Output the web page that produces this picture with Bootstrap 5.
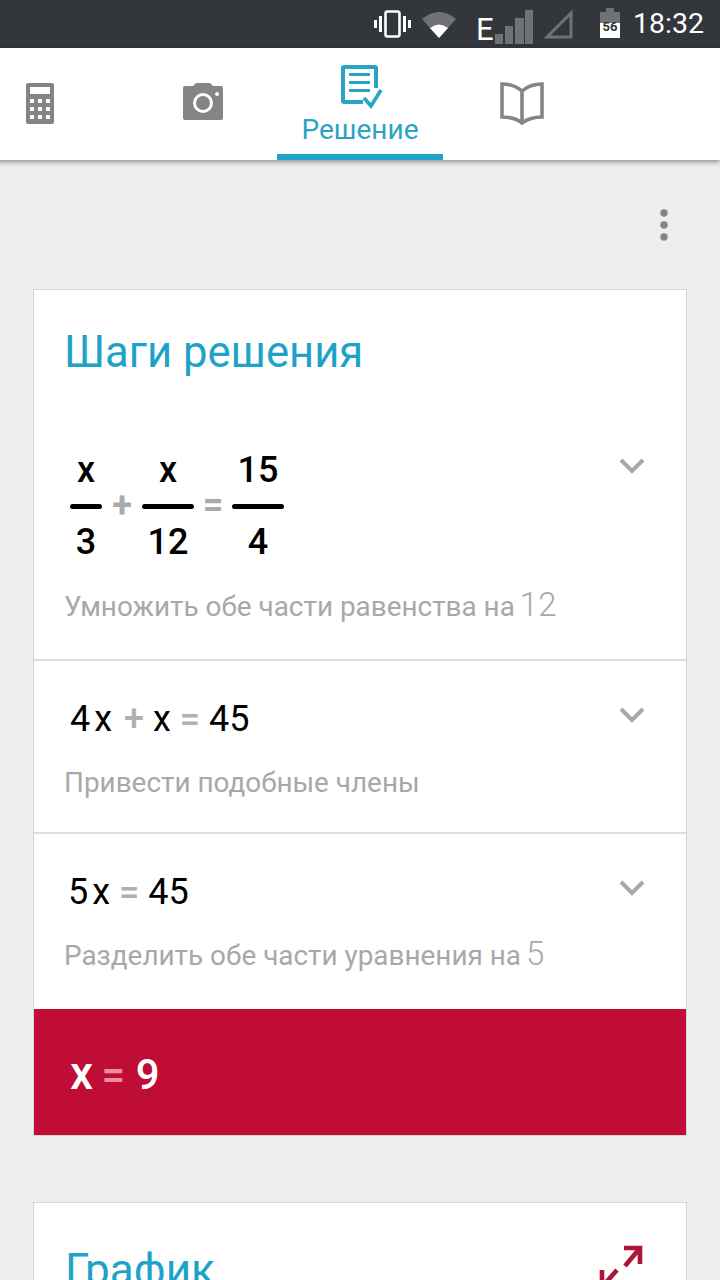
<!DOCTYPE html>
<html lang="ru">
<head>
  <meta charset="UTF-8" />
  <title>Решение</title>
  <meta name="viewport" content="width=device-width, initial-scale=1" />
  <link href="https://cdn.jsdelivr.net/npm/bootstrap@5.3.0/dist/css/bootstrap.min.css" rel="stylesheet" />
  <style>
    html, body { height: 1280px; overflow: hidden; }
    body { background: #eeeeee; font-family: Roboto, "Noto Sans", sans-serif; }
    .status-strip { height: 48px; background: #33363a; color: #fff; padding-right: 16px; }
    .status-strip svg { display: block; flex: none; }
    .ico-wifi { margin-left: 11px; }
    .net-e { font-weight: 400; font-size: 31px; line-height: 1; width: 18px; margin: 11px 0 0 20px; }
    .ico-signal { margin: 6px 0 0 1px; }
    .ico-tri { margin-left: 11px; }
    .ico-batt { margin: 0 0 2px 26px; }
    .clock { font-size: 28.5px; line-height: 1; width: 71px; margin-left: 13px; }
    .tab-strip { height: 112px; background: #fff; box-shadow: 0 2px 5px rgba(0,0,0,.4); margin-left: -40px; position: relative; }
    .tab-one { height: 112px; flex: none; }
    .tab-calc { width: 160px; padding-top: 35px; }
    .tab-cam { width: 157px; padding: 35px 0 0 9px; }
    .tab-on { width: 166px; border-bottom: 6px solid #1fa3c8; padding-top: 17px; color: #2ba3c6; font-size: 28px; line-height: 34px; }
    .tab-on svg { display: block; margin: 0 auto 4px; position: relative; left: 2px; }
    .tab-book { width: 158px; padding-top: 33px; }
    .dots-row { height: 129px; padding: 49px 52px 0 0; }
    .sheet { margin: 0 33px 66px; background: #fff; border: 1px solid #d6d6d6; }
    .sheet-title { font-size: 43.6px; line-height: 50px; color: #1ea2c7; padding: 38px 30px 1px; margin: 0; font-weight: 400; }
    .step-row { position: relative; padding: 0 30px; color: #000; }
    .step-row + .step-row { border-top: 2px solid #dedede; }
    .step-one { height: 280px; }
    .step-two { height: 173px; }
    .step-three { height: 177px; }
    .eq-line { font-size: 36px; line-height: 42px; padding: 37px 0 0 6px; height: 79px; }
    .step-three .eq-line { padding-left: 4px; }
    .eq-frac { height: 185px; padding: 70px 0 0 6px; font-size: 36px; font-weight: 500; }
    .frac-box { text-align: center; line-height: 42px; }
    .frac-box i { display: block; height: 5px; background: #000; border-radius: 3px; margin: 13px 0 12px; }
    .frac-s { width: 32px; }
    .frac-w { width: 52px; }
    .frac-op { width: 40px; text-align: center; margin-top: 35px; line-height: 42px; color: #aaa; font-weight: 700; }
    .frac-op-eq { width: 38px; }
    .op-gray { color: #b0b0b0; font-weight: 500; }
    .op-plus { margin-left: 3px; }
    .hint { color: #a8a8a8; font-size: 27.9px; line-height: 34px; margin-top: 26px; }
    .hint-num { font-size: 33px; font-weight: 300; margin-left: 5px; line-height: 30px; }
    .chev { position: absolute; right: 41px; top: 46px; }
    .step-one .chev { top: 79px; }
    .answer-bar { background: #c00d35; color: #fff; height: 126px; font-size: 42px; line-height: 128px; padding-left: 36px; font-weight: 500; }
    .answer-eq { color: #ef8ba3; }
    .answer-x { font-size: 46px; margin-right: -2px; }
    .expand-ico { position: absolute; right: 43px; top: 42px; }
    .graph-title { font-size: 44px; line-height: 50px; color: #1ea2c7; padding: 42px 31px 0; margin: 0; font-weight: 400; }
  </style>
</head>
<body>
  <div class="status-strip d-flex align-items-center justify-content-end">
    <svg width="37" height="28" viewBox="0 0 37 28" fill="#fff"><rect x="0" y="10" width="3" height="8"/><rect x="5" y="6" width="3" height="16"/><rect x="29" y="6" width="3" height="16"/><rect x="34" y="10" width="3" height="8"/><rect x="11.5" y="1.5" width="14" height="25" rx="2" fill="none" stroke="#fff" stroke-width="2.6"/></svg>
    <svg class="ico-wifi" width="34" height="28" viewBox="0 0 34 28"><path d="M0 9 Q17 -5 34 9 L17 28Z" fill="#6f7276"/><path d="M8 18 Q17 11 26 18 L17 28Z" fill="#fff"/></svg>
    <div class="net-e">E</div>
    <svg class="ico-signal" width="38" height="34" viewBox="0 0 38 34" fill="#6f7276"><rect x="0" y="24" width="8" height="10"/><rect x="10" y="16" width="8" height="18"/><rect x="20" y="8" width="9" height="26"/><rect x="30" y="0" width="8" height="34"/></svg>
    <svg class="ico-tri" width="30" height="32" viewBox="0 0 30 32"><path d="M3 29 L27 5 V29Z" fill="none" stroke="#6f7276" stroke-width="3"/></svg>
    <svg class="ico-batt" width="20" height="30" viewBox="0 0 20 30"><rect x="6" y="0" width="8" height="4" fill="#6f7276"/><rect x="0" y="4" width="20" height="11" fill="#6f7276"/><rect x="0" y="15" width="20" height="15" fill="#fff"/><text x="10" y="23" font-size="13" font-weight="700" text-anchor="middle" fill="#333" font-family="Roboto">56</text></svg>
    <div class="clock">18:32</div>
  </div>

  <div class="tab-strip d-flex">
    <div class="tab-one tab-calc d-flex justify-content-center">
      <svg width="28" height="41" viewBox="0 0 28 41"><rect width="28" height="41" rx="2" fill="#858585"/><rect x="4" y="4" width="20" height="7" fill="#fff"/><g fill="#fff"><rect x="4" y="16" width="4" height="4"/><rect x="12" y="16" width="4" height="4"/><rect x="20" y="16" width="4" height="4"/><rect x="4" y="24" width="4" height="4"/><rect x="12" y="24" width="4" height="4"/><rect x="20" y="24" width="4" height="4"/><rect x="4" y="32" width="4" height="4"/><rect x="12" y="32" width="4" height="4"/><rect x="20" y="32" width="4" height="4"/></g></svg>
    </div>
    <div class="tab-one tab-cam d-flex justify-content-center">
      <svg width="40" height="37" viewBox="0 0 40 37"><path d="M2 3 H10 L13 0 H27 L30 3 H38 Q40 3 40 5 V35 Q40 37 38 37 H2 Q0 37 0 35 V5 Q0 3 2 3Z" fill="#858585"/><circle cx="20" cy="20" r="8.5" fill="none" stroke="#fff" stroke-width="3"/><circle cx="34" cy="11" r="2" fill="#fff"/></svg>
    </div>
    <div class="tab-one tab-on text-center">
      <svg width="42" height="44" viewBox="0 0 42 44"><path d="M22 37 H3 Q2 37 2 36 V3 Q2 2 3 2 H34 Q35 2 35 3 V23" fill="none" stroke="#2ba3c6" stroke-width="4"/><rect x="8" y="8" width="21" height="3" fill="#2ba3c6"/><rect x="8" y="16" width="21" height="3" fill="#2ba3c6"/><rect x="8" y="24" width="21" height="3" fill="#2ba3c6"/><path d="M23 33 L30 41 L40 25" fill="none" stroke="#2ba3c6" stroke-width="3.6"/></svg>
      Решение
    </div>
    <div class="tab-one tab-book d-flex justify-content-center">
      <svg width="44" height="44" viewBox="0 0 44 44"><path d="M2 3 Q14 3 22 10 Q30 3 42 3 V36 Q30 36 22 42 Q14 36 2 36Z M22 10 V42" fill="none" stroke="#858585" stroke-width="3.6"/></svg>
    </div>
  </div>

  <div class="dots-row d-flex justify-content-end">
    <svg width="8" height="32" viewBox="0 0 8 32" fill="#858585"><circle cx="4" cy="4" r="3.7"/><circle cx="4" cy="16" r="3.7"/><circle cx="4" cy="28" r="3.7"/></svg>
  </div>

  <div class="sheet">
    <h2 class="sheet-title">Шаги решения</h2>
    <div class="step-row step-one">
      <div class="eq-frac d-flex align-items-start">
        <div class="frac-box frac-s">x<i></i>3</div>
        <div class="frac-op">+</div>
        <div class="frac-box frac-w">x<i></i>12</div>
        <div class="frac-op frac-op-eq">=</div>
        <div class="frac-box frac-w">15<i></i>4</div>
      </div>
      <div class="hint">Умножить обе части равенства на<span class="hint-num">12</span></div>
      <svg class="chev" width="26" height="16" viewBox="0 0 26 16"><path d="M2 2 L13 13 L24 2" fill="none" stroke="#a8a8a8" stroke-width="4"/></svg>
    </div>
    <div class="step-row step-two">
      <div class="eq-line">4<span class="ms-1">x</span> <span class="op-gray op-plus">+</span> x <span class="op-gray">=</span> 45</div>
      <div class="hint">Привести подобные члены</div>
      <svg class="chev" width="26" height="16" viewBox="0 0 26 16"><path d="M2 2 L13 13 L24 2" fill="none" stroke="#a8a8a8" stroke-width="4"/></svg>
    </div>
    <div class="step-row step-three">
      <div class="eq-line">5<span class="ms-1">x</span> <span class="op-gray">=</span> 45</div>
      <div class="hint">Разделить обе части уравнения на<span class="hint-num">5</span></div>
      <svg class="chev" width="26" height="16" viewBox="0 0 26 16"><path d="M2 2 L13 13 L24 2" fill="none" stroke="#a8a8a8" stroke-width="4"/></svg>
    </div>
    <div class="answer-bar"><span class="answer-x">x</span> <span class="answer-eq">=</span> 9</div>
  </div>

  <div class="sheet position-relative">
    <h2 class="graph-title">График</h2>
    <svg class="expand-ico" width="44" height="45" viewBox="0 0 44 45"><path d="M25 3 H41 V19 M41 3 L26 21 M18 25 L3 42 M3 25 V42 H19" fill="none" stroke="#ad1538" stroke-width="4.6"/></svg>
  </div>
</body>
</html>
